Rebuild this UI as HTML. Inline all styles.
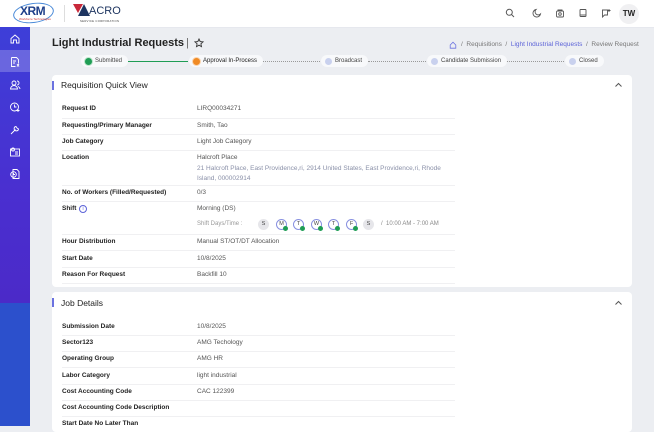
<!DOCTYPE html>
<html><head><meta charset="utf-8"><style>
*{margin:0;padding:0;box-sizing:border-box}
body{width:654px;height:426px;overflow:hidden;background:#eceef2;font-family:"Liberation Sans",sans-serif;position:relative;color:#222}
.a{position:absolute}
.top{left:0;top:0;width:654px;height:27px;background:#fff}
.side{left:0;top:27px;width:30px;height:276px;background:linear-gradient(180deg,#3d3fd8 0%,#4a2fd0 60%,#4b2ac8 100%)}
.side2{left:0;top:303px;width:30px;height:123px;background:#2c50cc}
.ic{left:9px;width:12px;height:12px}
.card{left:52px;width:580px;background:#fff;border-radius:4px}
.bar{left:52px;width:2px;height:9px;background:#6b72e0}
.h{font-size:8.5px;color:#222;left:61px}
.lab{left:62px;font-size:6.5px;font-weight:bold;color:#222}
.val{left:197px;font-size:6.5px;color:#555}
.ln{left:62px;width:393px;height:1px;background:#f0f0f2}
.pill{top:55px;height:12px;background:#f8f9fb;border-radius:6px;font-size:6px;color:#444;line-height:12px;padding-left:14px;padding-right:6px;white-space:nowrap}
.dot{position:absolute;left:4px;top:2.5px;width:7px;height:7px;border-radius:50%}
.day{top:219px;width:11px;height:11px;border-radius:50%;border:1px solid #8890e0;font-size:5.5px;text-align:center;line-height:9px;color:#444}
.day i{position:absolute;right:-2px;bottom:-2px;width:5px;height:5px;border-radius:50%;background:#1f9d55}
.ti{top:8px;width:10px;height:10px}
.chev{left:614px;width:9px;height:6px}
</style></head><body>
<div class="a top"></div>
<div class="a" style="left:0;top:27px;width:654px;height:1px;background:#e6e8ee"></div>
<div class="a" style="left:13px;top:3px;width:41px;height:20px;border:1.5px solid #4a8ad8;border-radius:50%;transform:rotate(-8deg)"></div>
<div class="a" style="left:20px;top:4px;font-size:12px;font-weight:bold;color:#1e3f8a;letter-spacing:-0.5px">XRM</div>
<div class="a" style="left:19px;top:17px;font-size:3px;color:#c33">Workforce Technologies</div>
<div class="a" style="left:64px;top:5px;width:1px;height:17px;background:#ddd"></div>
<div class="a" style="left:73px;top:4px;width:0;height:0;border-left:5px solid transparent;border-right:5px solid transparent;border-top:9px solid #c8283a"></div>
<div class="a" style="left:78px;top:4px;width:0;height:0;border-left:6px solid transparent;border-right:6px solid transparent;border-bottom:12px solid #1e3560"></div>
<div class="a" style="left:89px;top:5px;font-size:11px;color:#1e3560">ACRO</div>
<div class="a" style="left:80px;top:19px;font-size:2.8px;color:#444;letter-spacing:0.3px">SERVICE CORPORATION</div>
<svg class="a ti" style="left:505px" viewBox="0 0 10 10" fill="none" stroke="#555" stroke-width="1"><circle cx="4.3" cy="4.3" r="3"/><path d="M6.5 6.5L9 9"/></svg>
<svg class="a ti" style="left:532px" viewBox="0 0 10 10" fill="none" stroke="#555" stroke-width="0.9"><path d="M4 1.5A3.8 3.8 0 1 0 8.5 6 3 3 0 0 1 4 1.5z"/></svg>
<svg class="a ti" style="left:555px" viewBox="0 0 10 10" fill="none" stroke="#555" stroke-width="0.9"><rect x="1.5" y="3" width="7" height="6" rx="1"/><path d="M3 3V2h4v1"/><circle cx="5" cy="6" r="1.3"/></svg>
<svg class="a ti" style="left:578px" viewBox="0 0 10 10" fill="none" stroke="#555" stroke-width="0.9"><rect x="2" y="1.5" width="6" height="7" rx="0.6"/><path d="M2 7h6"/></svg>
<svg class="a ti" style="left:601px" viewBox="0 0 10 10" fill="none" stroke="#555" stroke-width="0.9"><path d="M1.5 2h5v5h-3l-2 2z"/><path d="M8 1v3M6.5 2.5h3"/></svg>
<div class="a" style="left:619px;top:4px;width:20px;height:20px;border-radius:50%;background:#f0f0f2;font-size:8px;font-weight:bold;text-align:center;line-height:20px;color:#222">TW</div>
<div class="a side"></div><div class="a side2"></div>
<div class="a" style="left:0;top:50px;width:30px;height:22px;background:rgba(255,255,255,0.22)"></div>
<svg class="a ic" style="top:33px" viewBox="0 0 12 12" fill="none" stroke="#fff" stroke-width="0.9"><path d="M2 5.5L6 2l4 3.5V10H7.5V7h-3v3H2z"/></svg>
<svg class="a ic" style="top:56px" viewBox="0 0 12 12" fill="none" stroke="#fff" stroke-width="0.9"><path d="M2.5 1.5h5l2 2v4M2.5 1.5v9h4"/><path d="M4 5h3M4 7h2"/><path d="M8 8l2 2.5M10 8l-2 2.5"/></svg>
<svg class="a ic" style="top:79px" viewBox="0 0 12 12" fill="none" stroke="#fff" stroke-width="0.9"><circle cx="5" cy="4" r="2"/><path d="M1.5 10a3.5 3.5 0 0 1 7 0zM8 2a2 2 0 0 1 0 4M9 7.5a3 3 0 0 1 2 2.5"/></svg>
<svg class="a ic" style="top:101px" viewBox="0 0 12 12" fill="none" stroke="#fff" stroke-width="0.9"><circle cx="5.5" cy="6" r="4"/><path d="M5.5 3.5V6H7.5"/><path d="M9 8v3M7.5 9.5h3"/></svg>
<svg class="a ic" style="top:124px" viewBox="0 0 12 12" fill="none" stroke="#fff" stroke-width="0.9"><path d="M2 10l4.5-4.5M7 2.5a2.2 2.2 0 1 0 2.5 2.5L8 4z"/></svg>
<svg class="a ic" style="top:146px" viewBox="0 0 12 12" fill="none" stroke="#fff" stroke-width="0.9"><rect x="1.5" y="3" width="9" height="7"/><circle cx="4" cy="3.5" r="1.5"/><path d="M6 6h3M6 8h3"/></svg>
<svg class="a ic" style="top:168px" viewBox="0 0 12 12" fill="none" stroke="#fff" stroke-width="0.9"><path d="M4 1.5h4l2 2v7H4z"/><circle cx="4.5" cy="6.5" r="2.8"/><path d="M4.5 5v1.5H6"/></svg>
<div class="a" style="left:52px;top:37px;font-size:11px;font-weight:bold;color:#222;white-space:nowrap">Light Industrial Requests</div>
<div class="a" style="left:186px;top:37px;font-size:11px;color:#666">|</div>
<svg class="a" style="left:194px;top:38px;width:10px;height:10px" viewBox="0 0 10 10" fill="none" stroke="#333" stroke-width="0.9"><path d="M5 1l1.2 2.6 2.8.3-2.1 1.9.6 2.8L5 7.2 2.5 8.6l.6-2.8L1 3.9l2.8-.3z"/></svg>
<svg class="a" style="left:449px;top:41px;width:8px;height:8px" viewBox="0 0 10 10" fill="none" stroke="#6b72e0" stroke-width="1"><path d="M1.5 5L5 1.5 8.5 5V9h-7z"/></svg>
<div class="a" style="left:461px;top:41px;font-size:6.5px;color:#777;white-space:nowrap">/ &nbsp;Requisitions &nbsp;/ &nbsp;<span style="color:#5c63d8">Light Industrial Requests</span> &nbsp;/ &nbsp;Review Request</div>
<div class="a" style="left:128px;top:61px;width:60px;height:1px;background:#1f9d55"></div>
<div class="a" style="left:260px;top:61px;width:60px;border-top:1px dotted #999"></div>
<div class="a" style="left:368px;top:61px;width:60px;border-top:1px dotted #999"></div>
<div class="a" style="left:506px;top:61px;width:60px;border-top:1px dotted #999"></div>
<div class="a pill" style="left:81px"><span class="dot" style="background:#1f9d55;box-shadow:0 0 0 1px #bde5cc"></span>Submitted</div>
<div class="a pill" style="left:189px;color:#222"><span class="dot" style="background:#f08a24;box-shadow:0 0 0 1px #fbd4ad"></span>Approval In-Process</div>
<div class="a pill" style="left:321px"><span class="dot" style="background:#c9d1ee"></span>Broadcast</div>
<div class="a pill" style="left:427px"><span class="dot" style="background:#c9d1ee"></span>Candidate Submission</div>
<div class="a pill" style="left:565px"><span class="dot" style="background:#c9d1ee"></span>Closed</div>
<div class="a card" style="top:75px;height:212px"></div>
<div class="a bar" style="top:81px"></div>
<div class="a h" style="top:80px">Requisition Quick View</div>
<svg class="a chev" style="top:82px" viewBox="0 0 9 6" fill="none" stroke="#555" stroke-width="1"><path d="M1.5 4.5L4.5 1.5 7.5 4.5"/></svg>
<div class="a lab" style="top:105px">Request ID</div><div class="a val" style="top:105px">LIRQ00034271</div><div class="a ln" style="top:118px"></div>
<div class="a lab" style="top:122px">Requesting/Primary Manager</div><div class="a val" style="top:122px">Smith, Tao</div><div class="a ln" style="top:134px"></div>
<div class="a lab" style="top:138px">Job Category</div><div class="a val" style="top:138px">Light Job Category</div><div class="a ln" style="top:150px"></div>
<div class="a lab" style="top:154px">Location</div><div class="a val" style="top:154px">Halcroft Place</div>
<div class="a val" style="top:164px;color:#8a90a8;width:250px;line-height:10px">21 Halcroft Place, East Providence,ri, 2914 United States, East Providence,ri, Rhode Island, 000002914</div>
<div class="a ln" style="top:185px"></div>
<div class="a lab" style="top:189px">No. of Workers (Filled/Requested)</div><div class="a val" style="top:189px">0/3</div><div class="a ln" style="top:201px"></div>
<div class="a lab" style="top:205px">Shift</div>
<div class="a" style="left:79px;top:205px;width:8px;height:8px;border:1px solid #5c63d8;border-radius:50%;font-size:5px;color:#5c63d8;text-align:center;line-height:6px">i</div>
<div class="a val" style="top:205px">Morning (DS)</div>
<div class="a val" style="top:221px;font-size:6px;color:#999">Shift Days/Time :</div>
<div class="a day" style="left:258px;background:#e6e6ea;border-color:#e6e6ea">S</div>
<div class="a day" style="left:276px">M<i></i></div>
<div class="a day" style="left:293px">T<i></i></div>
<div class="a day" style="left:311px">W<i></i></div>
<div class="a day" style="left:328px">T<i></i></div>
<div class="a day" style="left:346px">F<i></i></div>
<div class="a day" style="left:363px;background:#e6e6ea;border-color:#e6e6ea">S</div>
<div class="a val" style="left:381px;top:221px;font-size:6px;color:#888">/ &nbsp;10:00 AM - 7:00 AM</div>
<div class="a ln" style="top:234px"></div>
<div class="a lab" style="top:238px">Hour Distribution</div><div class="a val" style="top:238px">Manual ST/OT/DT Allocation</div><div class="a ln" style="top:250px"></div>
<div class="a lab" style="top:255px">Start Date</div><div class="a val" style="top:255px">10/8/2025</div><div class="a ln" style="top:267px"></div>
<div class="a lab" style="top:271px">Reason For Request</div><div class="a val" style="top:271px">Backfill 10</div><div class="a ln" style="top:283px"></div>
<div class="a card" style="top:292px;height:140px"></div>
<div class="a bar" style="top:298px"></div>
<div class="a h" style="top:298px">Job Details</div>
<svg class="a chev" style="top:300px" viewBox="0 0 9 6" fill="none" stroke="#555" stroke-width="1"><path d="M1.5 4.5L4.5 1.5 7.5 4.5"/></svg>
<div class="a lab" style="top:323px">Submission Date</div><div class="a val" style="top:323px">10/8/2025</div><div class="a ln" style="top:335px"></div>
<div class="a lab" style="top:339px">Sector123</div><div class="a val" style="top:339px">AMG Techology</div><div class="a ln" style="top:351px"></div>
<div class="a lab" style="top:355px">Operating Group</div><div class="a val" style="top:355px">AMG HR</div><div class="a ln" style="top:367px"></div>
<div class="a lab" style="top:372px">Labor Category</div><div class="a val" style="top:372px">light industrial</div><div class="a ln" style="top:384px"></div>
<div class="a lab" style="top:388px">Cost Accounting Code</div><div class="a val" style="top:388px">CAC 122399</div><div class="a ln" style="top:400px"></div>
<div class="a lab" style="top:404px">Cost Accounting Code Description</div><div class="a ln" style="top:416px"></div>
<div class="a lab" style="top:420px">Start Date No Later Than</div>
</body></html>
